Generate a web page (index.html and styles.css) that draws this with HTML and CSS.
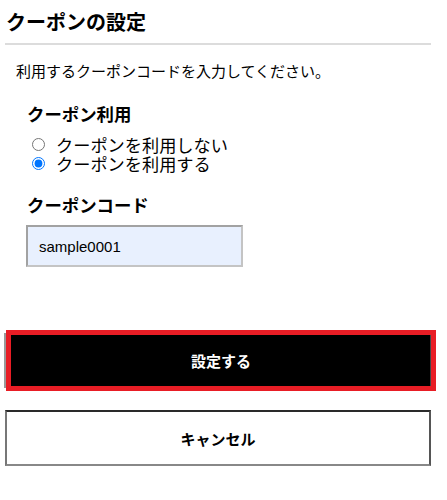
FILE: index.html
```html
<!DOCTYPE html>
<html lang="ja">
<head>
<meta charset="utf-8">
<title>クーポンの設定</title>
<link rel="stylesheet" href="styles.css">
</head>
<body>
<div class="page">
  <h1 class="title">クーポンの設定</h1>
  <p class="lead">利用するクーポンコードを入力してください。</p>
  <div class="section">
    <h2 class="label">クーポン利用</h2>
    <label class="radio-row"><input type="radio" name="use" class="radio"><span>クーポンを利用しない</span></label>
    <label class="radio-row"><input type="radio" name="use" class="radio" checked><span>クーポンを利用する</span></label>
    <h2 class="label label-code">クーポンコード</h2>
    <input type="text" class="code-input" value="sample0001">
  </div>
  <button class="btn-submit" type="button">設定する</button>
  <button class="btn-cancel" type="button">キャンセル</button>
</div>
</body>
</html>
```
FILE: styles.css
```css
html, body {
  margin: 0;
  padding: 0;
  background: #fff;
}
body {
  font-family: "Noto Sans CJK JP", "Noto Sans", sans-serif;
  color: #000;
}
.page {
  width: 426px;
  margin-left: 5px;
  display: flex;
  flex-direction: column;
  align-items: flex-start;
}
.title {
  align-self: stretch;
  margin: 0;
  padding: 10px 0 9px 1px;
  font-size: 20px;
  line-height: 24px;
  font-weight: 700;
  border-bottom: 2px solid #dcdcdc;
}
.lead {
  margin: 16px 0 0 11px;
  font-size: 15px;
  line-height: 20px;
}
.section {
  margin: 22px 0 0 22px;
  display: flex;
  flex-direction: column;
  align-items: flex-start;
}
.label {
  margin: 0 0 10px 0;
  font-size: 17.4px;
  line-height: 22px;
  font-weight: 700;
}
.label-code {
  margin: 21px 0 9px 0;
}
.radio-row {
  display: flex;
  align-items: center;
  font-size: 17.2px;
  line-height: 19px;
  height: 19px;
}
.radio {
  width: 13px;
  height: 13px;
  margin: 0 11px 0 5px;
}
.code-input {
  margin: 0 0 0 -1px;
  box-sizing: border-box;
  width: 217px;
  height: 42px;
  padding: 0 0 0 11px;
  border-style: solid;
  border-width: 2px;
  border-color: #a2a2a2 #c4c4c4 #c4c4c4 #a2a2a2;
  background: #e8f0fe;
  font-family: "Liberation Sans", Arial, sans-serif;
  font-size: 15px;
  color: #000;
  outline: none;
}
.btn-submit {
  margin: 63px 0 0 1px;
  box-sizing: border-box;
  width: 430px;
  height: 61px;
  border: 5px solid #e81d25;
  background: #000;
  color: #fff;
  font-family: "Noto Sans CJK JP", sans-serif;
  font-size: 15px;
  font-weight: 700;
  box-shadow: -5px 0 0 -3px #9a9a9a, inset -1px 0 0 #444;
  cursor: pointer;
}
.btn-cancel {
  margin: 19px 0 0 0;
  box-sizing: border-box;
  width: 426px;
  height: 56px;
  border-style: solid;
  border-width: 2px;
  border-color: #2a2a2a #555 #888 #777;
  background: #fff;
  color: #000;
  font-family: "Noto Sans CJK JP", sans-serif;
  font-size: 15px;
  font-weight: 700;
  cursor: pointer;
}
```
